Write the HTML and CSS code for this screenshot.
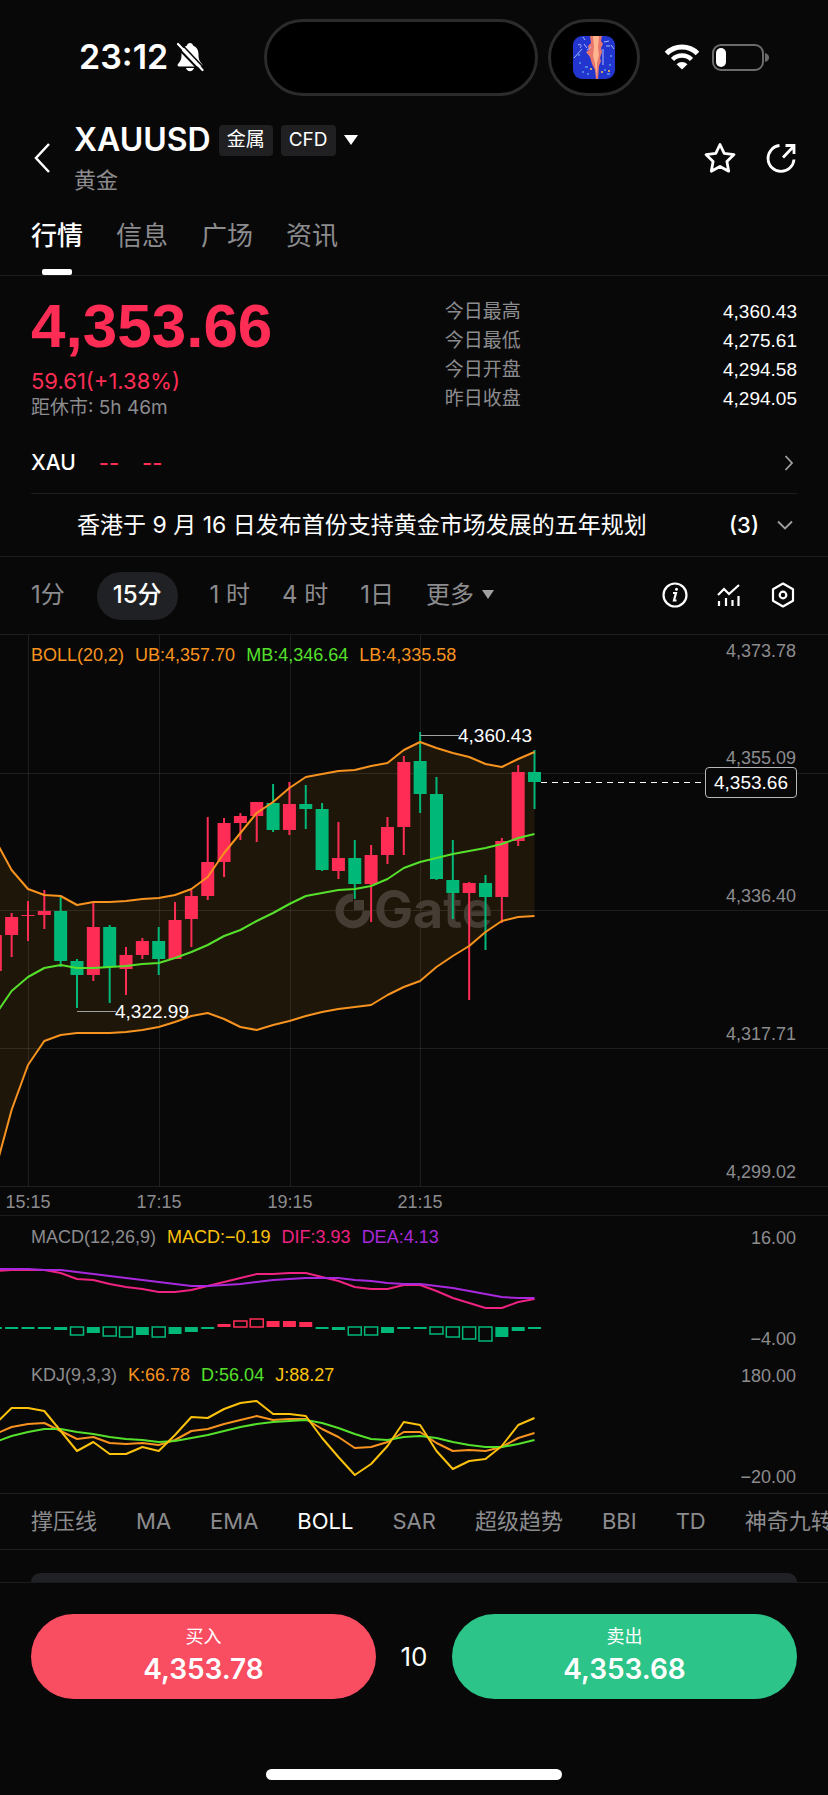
FILE: index.html
```
<!DOCTYPE html>
<html lang="zh-CN">
<head>
    <meta charset="UTF-8">
    <meta name="viewport" content="width=device-width, initial-scale=1.0">
    <title>XAUUSD 黄金</title>
    <link rel="stylesheet" href="styles.css">
</head>
<body>

    <div class="status-bar">
        <div class="status-time">
            <span>23:12</span>
            <svg width="28" height="30" viewBox="0 0 28 30">
                <path d="M14 1c-1.700 0-2.800 1-3 2.500C7 5 5.500 8.500 5.500 12.500c0 5-1 6.500-3.500 9.500-.8 1-.3 2.500 1 2.500h22c1.300 0 1.800-1.500 1-2.500-2.500-3-3.500-4.500-3.500-9.500 0-4-1.500-7.500-5.500-9C16.800 2 15.700 1 14 1z" fill="#fff"/>
                <path d="M10 26h8c-.5 2-2 3.200-4 3.200S10.500 28 10 26z" fill="#fff"/>
                <path d="M-.5 3.500L25 30" stroke="#080808" stroke-width="2"/>
                <path d="M2 2l24.500 26" stroke="#fff" stroke-width="2.200" stroke-linecap="round"/>
                <path d="M4.500 1L29 27" stroke="#080808" stroke-width="1.500"/>
            </svg>
        </div>
        <div class="island"></div>
        <div class="island-side">
            <svg width="42" height="43" viewBox="0 0 42 43">
                <defs><clipPath id="thumb"><rect width="42" height="43" rx="9"/></clipPath></defs>
                <g clip-path="url(#thumb)">
                    <rect width="42" height="43" fill="#2335cf"/>
                    <path d="M17 0h12l-1 5 2 3-2 4 1 4-2 6 1 3-2 5-1 13h-2l-1-9-3-6-2-7-4-5 3-2-1-4 3-3z" fill="#e8766d"/>
                    <path d="M20 0h6l-1 12 1 7-2 8v14l-2-13-2-8 1-9z" fill="#ffb58d"/>
                    <path d="M1 22l8-9M5 9c3-2 4 1 2 3M11 8l3 4M30 13v16M31 6l5-1M33 10h4M10 1l2 3M38 9l3 4M14 14l4-3" stroke="#a9b8ff" fill="none"/>
                    <path d="M6 27h2M12 31h3M9 36h2M31 34h2M36 29h2M34 38h3M14 38h2M5 19h2M37 20h2" stroke="#4a80e0" stroke-width="2"/>
                    <path d="M28 36h2M17 33h2M35 35h2" stroke="#d9a066" stroke-width="2"/>
                </g>
            </svg>
        </div>
        <div class="status-icons">
            <svg width="36" height="26" viewBox="0 0 36 26" fill="none" stroke="#fff">
                <path d="M2.500 9.500a22 22 0 0 1 31 0" stroke-width="5"/>
                <path d="M8.500 15.500a13.500 13.500 0 0 1 19 0" stroke-width="4.500"/>
                <path d="M18 25.500l-5.500-5.300a8 8 0 0 1 11 0z" fill="#fff" stroke="none"/>
            </svg>
            <svg width="58" height="27" viewBox="0 0 58 27">
                <rect x="1" y="1" width="50" height="25" rx="8" fill="none" stroke="#6b6b6b" stroke-width="2"/>
                <rect x="4" y="4" width="10" height="19" rx="5" fill="#fff"/>
                <path d="M53 9c3 1 4 2.500 4 4.500S56 17 53 18z" fill="#6b6b6b"/>
            </svg>
        </div>
    </div>

    <header class="header">
        <button class="icon-btn" aria-label="返回">
            <svg width="20" height="30" viewBox="-2 0 20 30" fill="none" stroke="#fff" stroke-width="2.500"><path d="M16 1L3 15l13 14"/></svg>
        </button>
        <div class="symbol">
            <div class="symbol-row">
                <h1>XAUUSD</h1>
                <span class="tag">金属</span>
                <span class="tag">CFD</span>
                <svg width="14" height="10" viewBox="0 0 14 10"><path d="M0 0h14L7 10z" fill="#fff"/></svg>
            </div>
            <p class="symbol-name">黄金</p>
        </div>
        <div class="header-actions">
            <button class="icon-btn" aria-label="收藏">
                <svg width="32" height="32" viewBox="0 0 32 32" fill="none" stroke="#fff" stroke-width="2.800" stroke-linejoin="round"><path d="M16 2.500l4.200 8.900 9.800 1.200-7.100 6.800 1.800 9.800-8.700-4.700-8.700 4.700 1.800-9.800L2 12.600l9.800-1.200z"/></svg>
            </button>
            <button class="icon-btn" aria-label="分享">
                <svg width="30" height="32" viewBox="0 0 30 32" fill="none" stroke="#fff" stroke-width="2.800"><path d="M13.500 3.500A13 13 0 1 0 28 17.500M17 15.500L27.500 4.500M19.500 3.500h8.500v8.500"/></svg>
            </button>
        </div>
    </header>

    <nav class="tabs">
        <a href="#" class="active">行情</a>
        <a href="#">信息</a>
        <a href="#">广场</a>
        <a href="#">资讯</a>
    </nav>

    <section class="quote">
        <div>
            <div class="price">4,353.66</div>
            <div class="change">59.61(+1.38%)</div>
            <div class="closing">距休市: 5h 46m</div>
        </div>
        <dl class="stats">
            <div><dt>今日最高</dt><dd>4,360.43</dd></div>
            <div><dt>今日最低</dt><dd>4,275.61</dd></div>
            <div><dt>今日开盘</dt><dd>4,294.58</dd></div>
            <div><dt>昨日收盘</dt><dd>4,294.05</dd></div>
        </dl>
    </section>

    <a href="#" class="related">
        <span>XAU</span>
        <span class="empty">--</span>
        <span class="empty">--</span>
        <svg width="10" height="16" viewBox="0 0 10 16" fill="none" stroke="#a0a0a3" stroke-width="1.800"><path d="M1.500 1L8 8l-6.500 7"/></svg>
    </a>

    <div class="news">
        <a href="#">香港于 9 月 16 日发布首份支持黄金市场发展的五年规划</a>
        <button class="news-more">(3)
            <svg width="16" height="10" viewBox="0 0 16 10" fill="none" stroke="#a0a0a3" stroke-width="1.800"><path d="M1 1.500L8 8.500l7-7"/></svg>
        </button>
    </div>

    <div class="periods">
        <button>1分</button>
        <button class="active">15分</button>
        <button>1 时</button>
        <button>4 时</button>
        <button>1日</button>
        <button>更多<svg width="12" height="9" viewBox="0 0 12 9"><path d="M0 0h12L6 9z" fill="#a0a0a3"/></svg></button>
        <div class="period-tools">
            <button aria-label="说明">
                <svg width="26" height="26" viewBox="0 0 26 26" fill="none" stroke="#fff" stroke-width="2.200"><circle cx="13" cy="13" r="11.500"/><path d="M11 11h3l-2 7.500h2.500"/><circle cx="14.500" cy="7.300" r="1.500" fill="#fff" stroke="none"/></svg>
            </button>
            <button aria-label="指标">
                <svg width="26" height="26" viewBox="0 0 26 26" fill="none" stroke="#fff" stroke-width="2.200"><path d="M2 13l6-6 5 5L23 3M3 19v5M10 16v8M16.500 18v6M22.500 14v10"/></svg>
            </button>
            <button aria-label="设置">
                <svg width="26" height="26" viewBox="0 0 26 26" fill="none" stroke="#fff" stroke-width="2.200" stroke-linejoin="round"><path d="M13 1.500l10 5.700v11.600l-10 5.700-10-5.700V7.200z"/><circle cx="13" cy="13" r="3.300"/></svg>
            </button>
        </div>
    </div>

    <section class="chart">
        <div class="legend">
            <span class="orange">BOLL(20,2)</span>
            <span class="orange">UB:4,357.70</span>
            <span class="green">MB:4,346.64</span>
            <span class="orange">LB:4,335.58</span>
        </div>
        <svg class="plot plot-main">
            <path id="band" class="band"/>
            <path class="grid" d="M28.500 0v551M159.500 0v551M290.500 0v551M420.500 0v551"/>
            <line class="grid" x1="0" y1="138.500" x2="100%" y2="138.500"/>
            <line class="grid" x1="0" y1="275.500" x2="100%" y2="275.500"/>
            <line class="grid" x1="0" y1="413.500" x2="100%" y2="413.500"/>
            <line class="grid" x1="0" y1="551.500" x2="100%" y2="551.500"/>
            <g class="watermark">
                <path d="M353 262.500a13.500 13.500 0 1 0 13.500 13.500" fill="none" stroke-width="8"/>
                <rect class="watermark-fill" x="354" y="265" width="10" height="10"/>
                <text class="watermark-fill" x="374" y="293">Gate</text>
            </g>
            <g id="candles"></g>
            <path id="upper" class="line orange"/>
            <path id="middle" class="line green"/>
            <path id="lower" class="line orange"/>
            <path class="pointer" d="M420 100.500h39M77 376.500h39"/>
            <text class="mark" x="458" y="107">4,360.43</text>
            <text class="mark" x="115" y="383">4,322.99</text>
            <line class="last-line" x1="541" y1="147.500" x2="703" y2="147.500"/>
            <g class="axis">
                <text x="100%" dx="-32" y="22">4,373.78</text>
                <text x="100%" dx="-32" y="129">4,355.09</text>
                <text x="100%" dx="-32" y="267">4,336.40</text>
                <text x="100%" dx="-32" y="405">4,317.71</text>
                <text x="100%" dx="-32" y="543">4,299.02</text>
            </g>
            <g class="axis times">
                <text x="28" y="573">15:15</text>
                <text x="159" y="573">17:15</text>
                <text x="290" y="573">19:15</text>
                <text x="420" y="573">21:15</text>
            </g>
        </svg>
        <div class="last-price">4,353.66</div>
    </section>

    <section class="chart sub">
        <div class="legend">
            <span>MACD(12,26,9)</span>
            <span class="yellow">MACD:−0.19</span>
            <span class="pink">DIF:3.93</span>
            <span class="purple">DEA:4.13</span>
        </div>
        <svg class="plot">
            <g id="bars"></g>
            <path id="dif" class="line pink"/>
            <path id="dea" class="line purple"/>
            <g class="axis">
                <text x="100%" dx="-32" y="28">16.00</text>
                <text x="100%" dx="-32" y="129">−4.00</text>
            </g>
        </svg>
    </section>

    <section class="chart sub last">
        <div class="legend">
            <span>KDJ(9,3,3)</span>
            <span class="orange">K:66.78</span>
            <span class="green">D:56.04</span>
            <span class="yellow">J:88.27</span>
        </div>
        <svg class="plot">
            <path id="kLine" class="line orange"/>
            <path id="dLine" class="line green"/>
            <path id="jLine" class="line yellow"/>
            <g class="axis">
                <text x="100%" dx="-32" y="28">180.00</text>
                <text x="100%" dx="-32" y="129">−20.00</text>
            </g>
        </svg>
    </section>

    <div class="indicators">
        <button>撑压线</button>
        <button>MA</button>
        <button>EMA</button>
        <button class="active">BOLL</button>
        <button>SAR</button>
        <button>超级趋势</button>
        <button>BBI</button>
        <button>TD</button>
        <button>神奇九转</button>
    </div>

    <div class="sheet"><div class="sheet-card"></div></div>

    <footer class="trade">
        <button class="trade-btn buy"><span>买入</span><strong>4,353.78</strong></button>
        <div class="spread">10</div>
        <button class="trade-btn sell"><span>卖出</span><strong>4,353.68</strong></button>
    </footer>
    <div class="home-indicator"></div>

    <script src="chart.js"></script>
</body>
</html>
```

FILE: styles.css
```
* {
    box-sizing: border-box;
}

body {
    background-color: #080808;
    color: #fff;
    font-family: Inter, "Noto Sans CJK SC", sans-serif;
    margin: 0;
    overflow-x: hidden;
}

h1, p, dl, dd {
    margin: 0;
}

a {
    color: inherit;
    text-decoration: none;
}

button {
    background: none;
    border: none;
    padding: 0;
    color: inherit;
    font-family: inherit;
    font-size: inherit;
    line-height: inherit;
    cursor: pointer;
}

svg {
    display: block;
    flex-shrink: 0;
}

/* status bar */
.status-bar {
    display: flex;
    align-items: center;
    height: 114px;
    padding: 0 58px 0 79px;
}

.status-time {
    display: flex;
    align-items: center;
    gap: 8px;
    flex: 1;
    font-size: 34px;
    font-weight: 600;
    line-height: 40px;
}

.island {
    width: 274px;
    height: 77px;
    border: 3px solid #2b2b2b;
    border-radius: 39px;
    background-color: #000;
}

.island-side {
    display: flex;
    align-items: center;
    justify-content: center;
    width: 92px;
    height: 77px;
    margin-left: 10px;
    border: 3px solid #2b2b2b;
    border-radius: 39px;
    background-color: #000;
}

.status-icons {
    display: flex;
    align-items: center;
    justify-content: flex-end;
    gap: 12px;
    flex: 0 0 130px;
}

/* header */
.header {
    display: flex;
    align-items: center;
    padding: 8px 32px 0 31px;
}

.icon-btn {
    display: block;
}

.symbol {
    flex: 1;
    padding-left: 23px;
}

.symbol-row {
    display: flex;
    align-items: center;
    gap: 8px;
    height: 36px;
}

h1 {
    font-size: 32px;
    font-weight: 600;
    line-height: 36px;
}

.tag {
    height: 31px;
    padding: 0 8px;
    border-radius: 4px;
    background-color: #202022;
    font-size: 19px;
    line-height: 30px;
}

.symbol-name {
    margin-top: 8px;
    color: #8c8c8f;
    font-size: 22px;
    line-height: 28px;
}

.header-actions {
    display: flex;
    gap: 30px;
}

/* page tabs */
.tabs {
    display: flex;
    gap: 33px;
    padding: 0 31px;
    border-bottom: 1px solid #1c1c1e;
    color: #8c8c8f;
    font-size: 26px;
    line-height: 36px;
}

.tabs a {
    position: relative;
    padding: 24px 0 21px;
}

.tabs .active {
    color: #fff;
    font-weight: 500;
}

.tabs .active::after {
    content: "";
    position: absolute;
    bottom: 0;
    left: 11px;
    right: 11px;
    height: 6px;
    border-radius: 2px;
    background-color: #fff;
}

/* quote */
.quote {
    display: grid;
    grid-template-columns: 54% 46%;
    padding: 21px 31px 11px;
}

.price {
    color: #ff2d55;
    font-family: "Liberation Sans", Arial, sans-serif;
    font-size: 62px;
    font-weight: 700;
    line-height: 58px;
}

.change {
    margin-top: 12px;
    color: #ff2d55;
    font-size: 22px;
    line-height: 28px;
}

.closing {
    color: #8c8c8f;
    font-size: 19px;
    line-height: 26px;
}

.stats div {
    display: flex;
    justify-content: space-between;
    font-size: 19px;
    line-height: 29px;
}

.stats dt {
    color: #8c8c8f;
}

.stats dd {
    font-family: "Liberation Sans", Arial, sans-serif;
}

.related {
    display: flex;
    align-items: center;
    gap: 20px;
    height: 62px;
    margin: 0 31px;
    border-bottom: 1px solid #1c1c1e;
    font-size: 21px;
    font-weight: 500;
}

.related .empty {
    padding-left: 3px;
    color: #ff2d55;
    font-size: 22px;
}

.related svg {
    margin-left: auto;
    margin-right: 3px;
}

.news {
    display: flex;
    align-items: center;
    justify-content: space-between;
    height: 63px;
    padding: 0 35px 0 77px;
    border-bottom: 1px solid #1c1c1e;
    font-size: 23px;
    line-height: 28px;
}

.news-more {
    display: flex;
    align-items: center;
    gap: 18px;
    font-size: 22px;
    font-weight: 500;
}

/* periods */
.periods {
    display: flex;
    align-items: center;
    gap: 32px;
    height: 78px;
    padding: 0 32px 0 31px;
    border-bottom: 1px solid #1c1c1e;
    color: #8c8c8f;
    font-size: 24px;
    line-height: 28px;
}

.periods button {
    display: flex;
    align-items: center;
    gap: 8px;
    padding-bottom: 2px;
    white-space: pre;
}

.periods .active {
    height: 48px;
    padding: 0 16px 2px;
    border-radius: 24px;
    background-color: #202124;
    color: #fff;
    font-weight: 500;
}

.period-tools {
    display: flex;
    gap: 28px;
    margin-left: auto;
}

/* charts */
.chart {
    position: relative;
    border-bottom: 1px solid #1c1c1e;
}

.sub {
    border-bottom: none;
}

.last {
    border-bottom: 1px solid #1c1c1e;
}

.legend {
    position: absolute;
    top: 8px;
    left: 31px;
    display: flex;
    gap: 11px;
    color: #8c8c8f;
    font-family: "Liberation Sans", Arial, sans-serif;
    font-size: 18px;
    line-height: 24px;
}

.sub .legend {
    top: 9px;
}

.plot {
    width: 100%;
    height: 138px;
}

.last .plot {
    height: 139px;
}

.plot-main {
    height: 580px;
}

.grid {
    fill: none;
    stroke: #fff;
    stroke-opacity: 0.09;
}

.band {
    fill: #1f160a;
}

.line {
    fill: none;
    stroke: currentColor;
    stroke-width: 2;
    stroke-linejoin: round;
}

.orange {
    color: #f7931e;
}

.green {
    color: #55e02c;
}

.yellow {
    color: #fcc20c;
}

.pink {
    color: #ee2281;
}

.purple {
    color: #a829dd;
}

.up {
    fill: #ff2d55;
    stroke: #ff2d55;
}

.down {
    fill: #00b877;
    stroke: #00b877;
}

.hollow {
    fill: #080808;
    stroke-width: 1.500;
}

.solid {
    stroke: none;
}

.watermark {
    stroke: #453c33;
    font-size: 52px;
    font-weight: 700;
}

.watermark-fill {
    fill: #453c33;
    stroke: none;
}

.pointer {
    fill: none;
    stroke: #a0a0a3;
}

.mark {
    fill: #fff;
    font-family: "Liberation Sans", Arial, sans-serif;
    font-size: 19px;
}

.last-line {
    stroke: #fff;
    stroke-dasharray: 6 5;
}

.axis {
    fill: #8c8c8f;
    font-family: "Liberation Sans", Arial, sans-serif;
    font-size: 18px;
    text-anchor: end;
}

.times {
    text-anchor: middle;
}

.last-price {
    position: absolute;
    top: 132px;
    right: 31px;
    width: 92px;
    border: 1px solid #b8b8ba;
    border-radius: 4px;
    background-color: #080808;
    font-family: "Liberation Sans", Arial, sans-serif;
    font-size: 19px;
    line-height: 29px;
    text-align: center;
}

/* indicator switcher */
.indicators {
    display: flex;
    gap: 39px;
    height: 56px;
    padding: 0 0 2px 31px;
    border-bottom: 1px solid #1c1c1e;
    color: #8c8c8f;
    font-size: 22px;
    line-height: 28px;
    white-space: nowrap;
    overflow: hidden;
}

.indicators button {
    flex-shrink: 0;
}

.indicators .active {
    color: #fff;
}

.sheet {
    padding: 23px 31px 0;
    border-bottom: 1px solid #1c1c1e;
}

.sheet-card {
    height: 9px;
    border-radius: 14px 14px 0 0;
    background-color: #202124;
}

/* trade buttons */
.trade {
    display: flex;
    align-items: center;
    padding: 31px 31px 70px;
}

.trade-btn {
    display: flex;
    flex-direction: column;
    align-items: center;
    justify-content: center;
    flex: 1;
    height: 85px;
    padding-bottom: 4px;
    border-radius: 43px;
}

.trade-btn span {
    font-size: 18px;
    line-height: 28px;
}

.trade-btn strong {
    font-size: 28px;
    font-weight: 600;
    line-height: 36px;
}

.buy {
    background-color: #f94d62;
}

.sell {
    background-color: #2cc488;
}

.spread {
    width: 76px;
    font-size: 26px;
    text-align: center;
}

.home-indicator {
    width: 296px;
    height: 11px;
    margin: 0 auto 15px;
    border-radius: 6px;
    background-color: #fff;
}
```

FILE: chart.js
```
const STEP = 16.34;
const BODY = 13;
const ZERO = 111;

// every series starts one slot left of the visible area
const xAt = i => -4.7 + i * STEP;

// direction, high, body top, body bottom, low
const candles = [
    ['up', 300, 300, 336, 336], ['up', 278, 282, 300, 322], ['up', 266, 280, 281, 306],
    ['up', 255, 276, 280, 294], ['down', 262, 276, 326, 332], ['down', 324, 326, 340, 373],
    ['up', 266, 292, 340, 346], ['down', 290, 292, 332, 368], ['up', 312, 320, 334, 360],
    ['up', 303, 306, 320, 324], ['down', 292, 306, 324, 340], ['up', 267, 285, 324, 324],
    ['up', 255, 261, 284, 312], ['up', 182, 227, 261, 265], ['up', 183, 188, 227, 242],
    ['up', 178, 181, 188, 205], ['up', 167, 167, 181, 207], ['down', 149, 168, 195, 197],
    ['up', 147, 169, 195, 200], ['down', 150, 169, 174, 194], ['down', 168, 174, 235, 236],
    ['up', 187, 223, 236, 244], ['down', 205, 223, 249, 264], ['up', 210, 220, 249, 287],
    ['up', 182, 192, 220, 229], ['up', 121, 127, 192, 220], ['down', 97, 126, 159, 178],
    ['down', 142, 159, 244, 245], ['down', 205, 245, 258, 284], ['up', 247, 248, 258, 365],
    ['down', 240, 248, 262, 315], ['up', 203, 206, 262, 288], ['up', 130, 137, 206, 211],
    ['down', 115, 137, 147, 174]
];

const upper = [205, 235, 254, 260, 261, 270, 267, 267, 266, 264, 263, 260, 254, 242, 218, 198, 178, 167, 153, 142, 139, 136, 135, 131, 128, 115, 107, 113, 118, 122, 129, 132, 124, 117];
const middle = [380, 356, 342, 333, 330, 333, 333, 332, 331, 329, 328, 323, 317, 310, 301, 295, 286, 278, 269, 261, 258, 255, 254, 251, 244, 233, 227, 223, 219, 216, 213, 209, 203, 199];
const lower = [535, 475, 430, 406, 400, 398, 398, 398, 397, 395, 392, 387, 381, 378, 384, 392, 395, 390, 386, 381, 377, 374, 372, 370, 360, 352, 346, 332, 321, 311, 297, 286, 282, 281];

const dif = [55, 54, 54, 54, 57, 63, 64, 68, 71, 73, 76, 76, 74, 70, 66, 62, 58, 58, 57, 57, 61, 65, 71, 73, 73, 69, 69, 75, 82, 87, 92, 92, 86, 83];
const dea = [53, 53, 53, 54, 54, 56, 58, 60, 62, 64, 66, 68, 70, 70, 69, 68, 66, 64, 63, 62, 62, 62, 64, 65, 67, 68, 68, 70, 72, 75, 78, 81, 82, 82];

// height below (+) or above (-) zero, 1 = hollow bar
const bars = [
    [2], [2], [2], [2], [3], [8, 1], [6], [9, 1], [10, 1], [8], [10, 1], [7], [5], [2],
    [-3], [-6, 1], [-8, 1], [-6], [-6], [-5], [2], [3], [8, 1], [8, 1], [6], [2], [2],
    [7, 1], [10, 1], [12, 1], [14, 1], [10], [4], [2]
];

const kLine = [80, 73, 70, 69, 77, 85, 83, 89, 90, 89, 91, 86, 77, 75, 70, 66, 62, 66, 65, 65, 75, 83, 94, 93, 88, 78, 78, 89, 97, 96, 97, 93, 84, 79];
const dLine = [88, 82, 78, 75, 75, 78, 80, 83, 85, 86, 88, 87, 84, 81, 77, 73, 70, 68, 67, 66, 69, 74, 80, 85, 86, 83, 82, 84, 88, 91, 93, 93, 90, 86];
const jLine = [70, 54, 54, 57, 77, 97, 88, 100, 100, 93, 97, 81, 63, 64, 55, 49, 47, 60, 60, 62, 84, 103, 121, 110, 92, 68, 71, 97, 115, 107, 105, 92, 71, 64];

function points(series) {
    return series.map((y, i) => xAt(i).toFixed(1) + ' ' + y);
}

function drawLine(id, series) {
    document.getElementById(id).setAttribute('d', 'M' + points(series).join('L'));
}

drawLine('upper', upper);
drawLine('middle', middle);
drawLine('lower', lower);
drawLine('dif', dif);
drawLine('dea', dea);
drawLine('kLine', kLine);
drawLine('dLine', dLine);
drawLine('jLine', jLine);

document.getElementById('band').setAttribute('d',
    'M' + points(upper).concat(points(lower).reverse()).join('L') + 'Z');

document.getElementById('candles').innerHTML = candles.map(([dir, high, top, bottom, low], i) => {
    const x = xAt(i);
    return `<g class="${dir}"><path stroke-width="2" d="M${x} ${high}V${low}"/>` +
        `<rect stroke="none" x="${x - BODY / 2}" y="${top}" width="${BODY}" height="${bottom - top}"/></g>`;
}).join('');

document.getElementById('bars').innerHTML = bars.map(([h, hollow], i) => {
    const dir = h < 0 ? 'up' : 'down';
    const y = h < 0 ? ZERO + h : ZERO;
    return `<rect class="${dir} ${hollow ? 'hollow' : 'solid'}" x="${xAt(i) - BODY / 2}" y="${y}" width="${BODY}" height="${Math.abs(h)}"/>`;
}).join('');
```
